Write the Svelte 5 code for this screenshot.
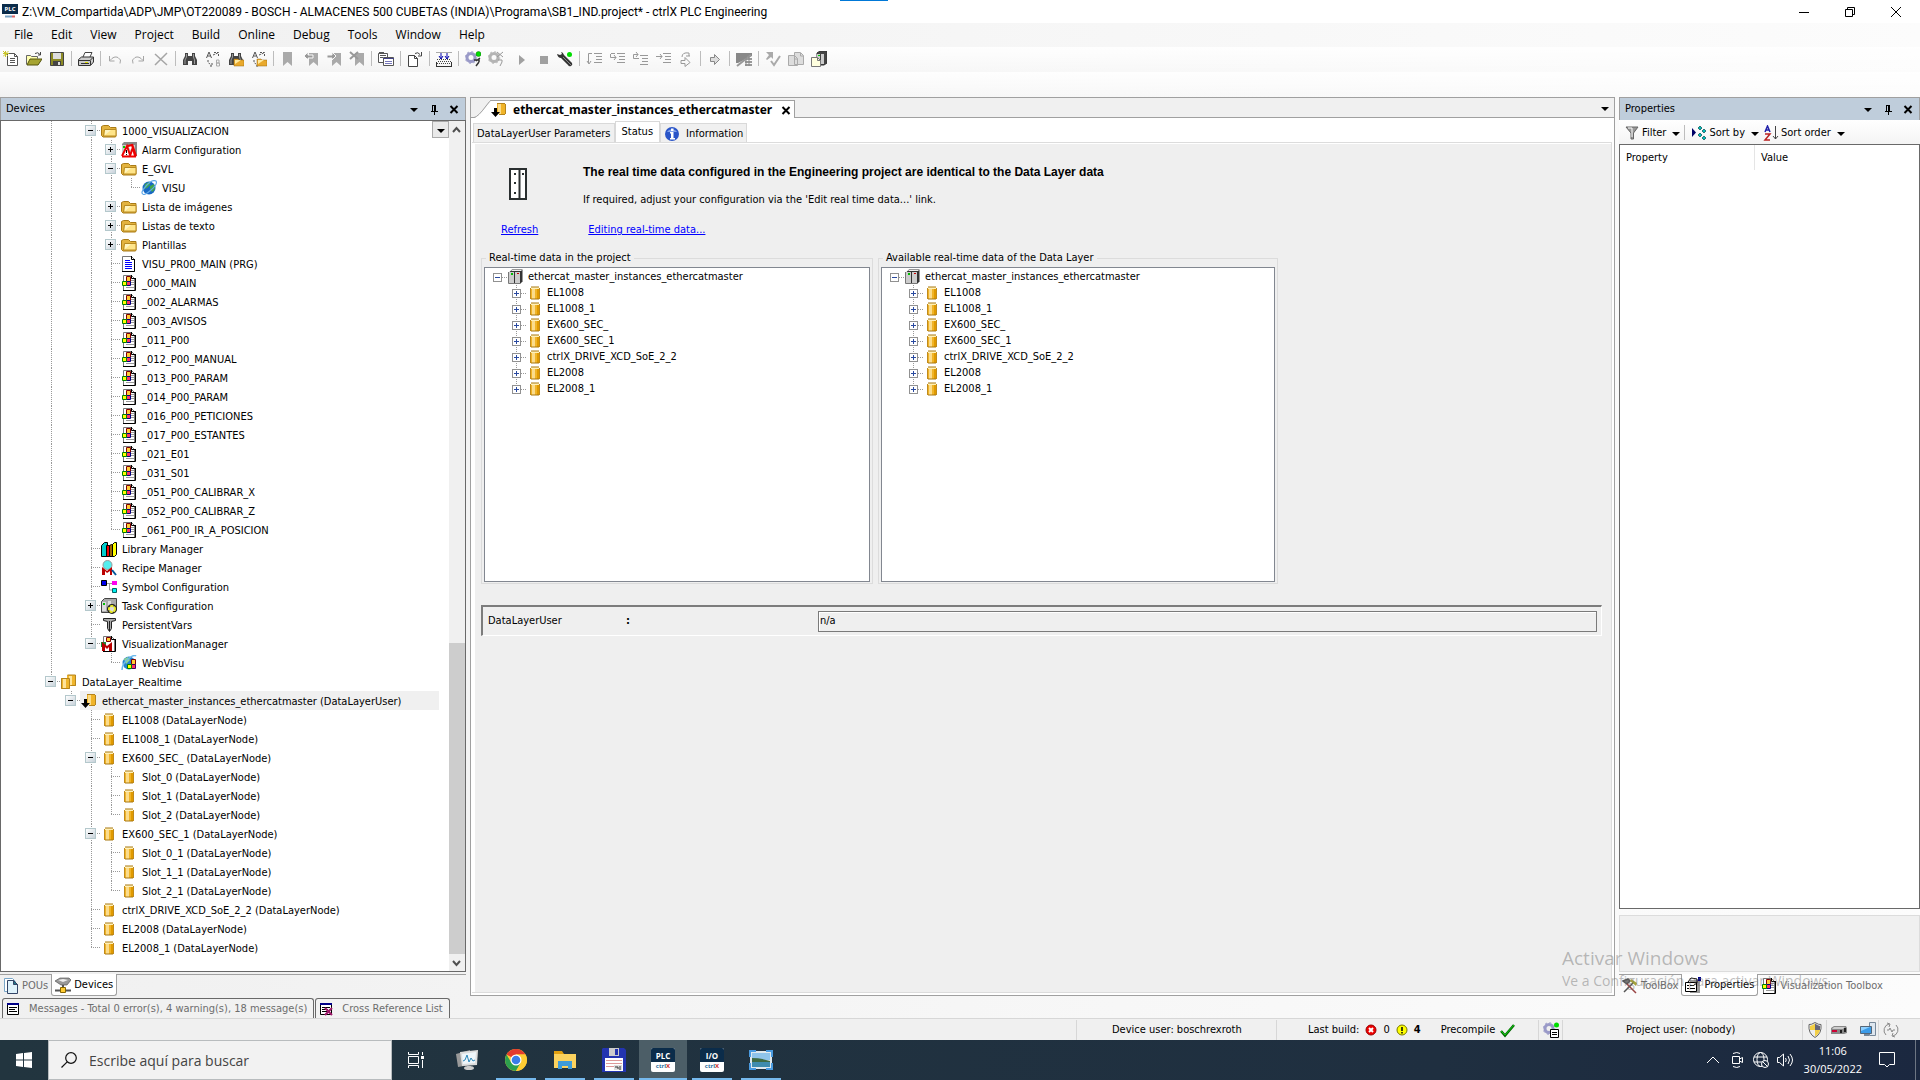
<script>
  const menus = [
    "File",
    "Edit",
    "View",
    "Project",
    "Build",
    "Online",
    "Debug",
    "Tools",
    "Window",
    "Help",
  ];

  const toolGroups = [
    ["new", "open", "save"],
    ["print"],
    ["undo", "redo", "delete"],
    ["find", "replace", "findFiles", "replaceFiles"],
    ["bookmark", "bookmarkPrev", "bookmarkNext", "bookmarkClear"],
    ["copyList"],
    ["export"],
    ["build"],
    ["login", "logout", "play", "stop", "wrench"],
    ["stepOver", "stepInto", "stepOut", "runTo", "setNext"],
    ["arrow"],
    ["flow"],
    ["check", "copy", "deviceCopy"],
  ];

  // depth, icon, label, expander state
  const nodes = [
    [2, "folder", "1000_VISUALIZACION", "-"],
    [3, "alarm", "Alarm Configuration", "+"],
    [3, "folder", "E_GVL", "-"],
    [4, "globe", "VISU"],
    [3, "folder", "Lista de imágenes", "+"],
    [3, "folder", "Listas de texto", "+"],
    [3, "folder", "Plantillas", "+"],
    [3, "page", "VISU_PR00_MAIN (PRG)"],
    [3, "visu", "_000_MAIN"],
    [3, "visu", "_002_ALARMAS"],
    [3, "visu", "_003_AVISOS"],
    [3, "visu", "_011_P00"],
    [3, "visu", "_012_P00_MANUAL"],
    [3, "visu", "_013_P00_PARAM"],
    [3, "visu", "_014_P00_PARAM"],
    [3, "visu", "_016_P00_PETICIONES"],
    [3, "visu", "_017_P00_ESTANTES"],
    [3, "visu", "_021_E01"],
    [3, "visu", "_031_S01"],
    [3, "visu", "_051_P00_CALIBRAR_X"],
    [3, "visu", "_052_P00_CALIBRAR_Z"],
    [3, "visu", "_061_P00_IR_A_POSICION"],
    [2, "books", "Library Manager"],
    [2, "recipe", "Recipe Manager"],
    [2, "symbols", "Symbol Configuration"],
    [2, "task", "Task Configuration", "+"],
    [2, "persistent", "PersistentVars"],
    [2, "visuManager", "VisualizationManager", "-"],
    [3, "webVisu", "WebVisu"],
    [0, "drums", "DataLayer_Realtime", "-"],
    [1, "drumDown", "ethercat_master_instances_ethercatmaster (DataLayerUser)", "-"],
    [2, "drum", "EL1008 (DataLayerNode)"],
    [2, "drum", "EL1008_1 (DataLayerNode)"],
    [2, "drum", "EX600_SEC_ (DataLayerNode)", "-"],
    [3, "drum", "Slot_0 (DataLayerNode)"],
    [3, "drum", "Slot_1 (DataLayerNode)"],
    [3, "drum", "Slot_2 (DataLayerNode)"],
    [2, "drum", "EX600_SEC_1 (DataLayerNode)", "-"],
    [3, "drum", "Slot_0_1 (DataLayerNode)"],
    [3, "drum", "Slot_1_1 (DataLayerNode)"],
    [3, "drum", "Slot_2_1 (DataLayerNode)"],
    [2, "drum", "ctrlX_DRIVE_XCD_SoE_2_2 (DataLayerNode)"],
    [2, "drum", "EL2008 (DataLayerNode)"],
    [2, "drum", "EL2008_1 (DataLayerNode)"],
  ];

  let selected = $state(30);

  // a level keeps its line while a sibling follows before the branch closes
  const continues = (index, level) => {
    for (let i = index + 1; i < nodes.length; i++) {
      if (nodes[i][0] === level) return true;
      if (nodes[i][0] < level) return false;
    }
    return false;
  };

  const rows = nodes.map(([depth, icon, label, state], index) => ({
    icon,
    label,
    state,
    cells: Array.from({ length: depth + 1 }, (_, level) => ({
      own: level === depth,
      below: continues(index, level),
    })),
  }));

  const dataNodes = [
    "EL1008",
    "EL1008_1",
    "EX600_SEC_",
    "EX600_SEC_1",
    "ctrlX_DRIVE_XCD_SoE_2_2",
    "EL2008",
    "EL2008_1",
  ];

  const groups = [
    "Real-time data in the project",
    "Available real-time data of the Data Layer",
  ];

  const apps = [
    { icon: "monitor", label: "Monitor" },
    { icon: "chrome", label: "Chrome", open: true },
    { icon: "explorer", label: "Explorer", open: true },
    { icon: "floppy", label: "Total Commander", open: true },
    { icon: "plc", label: "PLC", open: true, active: true },
    { icon: "io", label: "I/O", open: true },
    { icon: "photo", label: "Photo", open: true },
  ];

  let userState = $state("n/a");
  let search = $state("");
</script>

{#snippet drumShape()}
  <path d="M4 3h8v11H4z" fill="#f0b429" />
  <path d="M5 3h3v11H5z" fill="#fbdc8c" />
  <path d="M10 3h2v11h-2z" fill="#e09a00" />
  <path d="M4 2h8v2H4z" fill="#fff0b8" />
  <path d="M4 2h8M4 14h8" stroke="#a87812" />
  <path d="M3.5 3v11M12.5 3v11" stroke="#c08a1c" />
{/snippet}

{#snippet pageShape()}
  <path d="M2.500.5h8l3 3v12h-11z" fill="#fff" stroke="#777" />
  <path d="M14.500 3v12.500H2M10.500 0v3.500H14" fill="none" stroke="#000" />
{/snippet}

{#snippet visuShape()}
  {@render pageShape()}
  <path d="M10 5.500h3M10 7.500h3M10 9.500h3M5 12.500h8" stroke="#999" />
  <path d="M5.500 1.500h4v5h-4z" fill="#fc3" stroke="#800000" />
  <path d="M5.500 6.500h4v4h-4z" fill="#f36" stroke="#000080" />
  <path d="M1.500 6.500h4v4h-4z" fill="#ff0" stroke="#008000" />
{/snippet}

{#snippet bookmarkShape()}
  <path d="M6 2h9v13l-4.500-4L6 15z" fill="#aaa" />
{/snippet}

{#snippet binoculars()}
  <path d="M3 2h3v3h4V2h3v3l2 4v5h-5v-4H6v4H1V9l2-4z" fill="#444" />
  <path d="M4.500 3v3L3 9v4M11.500 3v3l1 3v4" fill="none" stroke="#999" />
{/snippet}

{#snippet replaceShape()}
  <path d="M1.500 7L4 1l2.500 6M2.500 5h3" fill="none" stroke="#555" />
  <path d="M8 4l5-2M9 1.500h4.500V6M3 9v2l3 3.500M7 12v3H4" fill="none" stroke="#555" stroke-dasharray="2 1" />
{/snippet}

{#snippet miniFolder()}
  <path d="M6 8h4l1 1h5v6H6z" fill="#e9a92c" stroke="#9b6a12" stroke-width=".5" />
  <path d="M7 9h6l-6 4z" fill="#ffeaa0" />
{/snippet}

{#snippet gearShape(color)}
  <circle cx="6" cy="6.500" r="4" fill="none" stroke={color} stroke-width="3" />
  <circle cx="6" cy="6.500" r="5.800" fill="none" stroke={color} stroke-dasharray="2 2.500" />
{/snippet}

{#snippet icon(name)}
  <svg class="icon" viewBox="0 0 16 16" aria-hidden="true">
    {#if name === "new"}
      <path d="M4.500 2.500h7l3 3v9h-10z" fill="#fff" stroke="#555" />
      <path d="M11.500 2.500v3h3M7 7.500h5M7 9.500h5M7 11.500h5" fill="none" stroke="#555" />
      <path d="M0 0l5 5M5.500 0L0 5.500M2.500 0v6M0 2.500h6" stroke="#c9c52c" />
    {:else if name === "open"}
      <path d="M.5 13.500v-9h4l1 1h6v2" fill="#ffffb0" stroke="#666" />
      <path d="M1 14l3-6h12l-4 6z" fill="#a6a432" stroke="#55550c" />
      <path d="M9 2.500q3-2 5 1M14.500 1v3H12" fill="none" stroke="#444" />
    {:else if name === "save"}
      <path d="M1.500 1.500h13v13h-13z" fill="#8c8a24" stroke="#444" />
      <path d="M4 2h8v6H4z" fill="#ddd" />
      <path d="M4 10h8v5H4z" fill="#444" />
      <path d="M9 11h2v3H9z" fill="#ddd" />
    {:else if name === "print"}
      <path d="M5 6l2-4.500h7L12 6" fill="#fff" stroke="#444" />
      <path d="M.5 8.500l3-2.500h12v5l-3 3.500H.5z" fill="#ccc" stroke="#333" />
      <path d="M1 9.500h11l3-3M12.500 9.500V14M3 12.500h8" fill="none" stroke="#333" />
      <path d="M7 11h3v1H7z" fill="#dd0" />
    {:else if name === "undo"}
      <path d="M2.500 5v5h5M3 9.500q4-5 8-3t2 6" fill="none" stroke="#a5a5a5" />
    {:else if name === "redo"}
      <path d="M13.500 5v5h-5M13 9.500q-4-5-8-3t-2 6" fill="none" stroke="#a5a5a5" />
    {:else if name === "delete"}
      <path d="M2 3l12 11M14 2L2 14" stroke="#a5a5a5" stroke-width="1.500" />
    {:else if name === "find"}
      {@render binoculars()}
    {:else if name === "replace"}
      {@render replaceShape()}
      <path d="M11.500 9v6h3v-3h-3h2.500V9z" fill="none" stroke="#aaa" />
    {:else if name === "findFiles"}
      {@render binoculars()}
      {@render miniFolder()}
    {:else if name === "replaceFiles"}
      {@render replaceShape()}
      {@render miniFolder()}
    {:else if name === "bookmark"}
      <path d="M3 1h9v14l-4.500-4L3 15z" fill="#aaa" />
    {:else if name === "bookmarkPrev"}
      {@render bookmarkShape()}
      <path d="M1 5l4-4v3h5v3H5v2z" fill="#999" stroke="#f8f8f8" />
    {:else if name === "bookmarkNext"}
      {@render bookmarkShape()}
      <path d="M10 5L6 1v3H1v3h5v2z" fill="#999" stroke="#f8f8f8" />
    {:else if name === "bookmarkClear"}
      {@render bookmarkShape()}
      <path d="M1 1l8 7M9 1L1 8" stroke="#999" stroke-width="2" />
    {:else if name === "copyList"}
      <path d="M.5 2.500h9v9h-9z" fill="#fff" stroke="#555" />
      <path d="M1 1.500h5M2 4.500h6M2 6.500h3" stroke="#555" />
      <path d="M5.500 6.500h10v8h-10z" fill="#fff" stroke="#555" />
      <path d="M5 7.500h11" stroke="#448" />
      <path d="M7 10.500h7M7 12.500h7" stroke="#77b" />
    {:else if name === "export"}
      <path d="M1.500 4.500h6l3 3v8h-9z" fill="#fff" stroke="#444" />
      <path d="M7.500 4.500v3h3M8 2.500q3-2 5 1M14.500 1v4H11" fill="none" stroke="#444" />
    {:else if name === "build"}
      <path d="M0 1.500h16" stroke="#aaa" />
      <path d="M0 15.500h16M.5 11v5M15.500 11v5" stroke="#333" />
      <path d="M1 8.500h14M2 10.500h13M1 12.500h14" stroke="#444" stroke-dasharray="1 1" />
      <path d="M5 2v6M3 5l2 3 2-3M11 2v6M9 5l2 3 2-3" fill="none" stroke="#00a" />
    {:else if name === "login"}
      {@render gearShape("#9a9ac8")}
      <circle cx="13.500" cy="3" r="2.500" fill="#0d0" stroke="#070" stroke-width=".5" />
      <path d="M9 9h5v2M11 15l3-4M15 7l-4 3" fill="none" stroke="#333" stroke-width="1.500" />
    {:else if name === "logout"}
      {@render gearShape("#b4b4b4")}
      <path d="M9 1l6 5M15 1L9 6M10 9h4v2M12 15l2-4" fill="none" stroke="#999" />
    {:else if name === "play"}
      <path d="M8 4l6 5-6 5z" fill="#a0a0a0" />
    {:else if name === "stop"}
      <path d="M6 5h8v8H6z" fill="#a0a0a0" />
    {:else if name === "wrench"}
      <path d="M4 1q2 0 3 3l8 8q1 2-1 3t-3-1L4 7Q1 7 0 3l3 1 2-1z" fill="#333" />
      <path d="M6 6l8 8" stroke="#888" />
      <circle cx="12.500" cy="3.500" r="2.500" fill="#0d0" />
    {:else if name === "stepOver"}
      <path d="M8 2.500h8M10 5.500h6M10 8.500h6M8 11.500h8M6 2.500H2.500V12M1 10l2 3 2-3" fill="none" stroke="#999" />
    {:else if name === "stepInto"}
      <path d="M8 2.500h8M10 5.500h6M10 8.500h6M8 11.500h8M2 2.500h4M1.500 3v3.500H7M5 4l2 2.500L5 9" fill="none" stroke="#999" />
    {:else if name === "stepOut"}
      <path d="M8 4.500h8M10 7.500h6M10 10.500h6M8 13.500h8M7 7.500H1.500v-4H6M4 1l2 2.500L4 6" fill="none" stroke="#999" />
    {:else if name === "runTo"}
      <path d="M8 2.500h8M10 5.500h6M10 8.500h6M8 11.500h8M1 5.500h6M5 3l2 2.500L5 8" fill="none" stroke="#999" />
    {:else if name === "setNext"}
      <path d="M4 6q0-5 7-4v3M8 5h4M3 9.500h4v-3l5 5-5 4v-3H3z" fill="none" stroke="#999" />
    {:else if name === "arrow"}
      <path d="M3.500 6.500h4v-3l5 5-5 5v-3h-4z" fill="#ddd" stroke="#888" />
    {:else if name === "flow"}
      <path d="M0 2h16v3L2 12H0z" fill="#888" />
      <path d="M15 4L1 15M9 8h7M9 11h7M9 14h7" stroke="#999" stroke-width="2" />
      <path d="M10 6v9M13 5v10" stroke="#888" />
    {:else if name === "check"}
      <path d="M1 1h7v7L6 6l-4 3-1-1 3-4z" fill="#aaa" />
      <path d="M6 10l3 4 6-9" fill="none" stroke="#aaa" stroke-width="2" />
    {:else if name === "copy"}
      <path d="M6.500 1.500h6l3 3v9h-9zM.5 4.500h6l3 3v7H.5z" fill="#ddd" stroke="#aaa" />
      <path d="M12.500 2v3h3M6.500 5v3h3" fill="none" stroke="#aaa" />
    {:else if name === "deviceCopy"}
      <path d="M6 2l3-2h7v12l-3 2H6z" fill="#444" stroke="#333" />
      <path d="M6 3h3v10H6zM10 3h3v10h-3z" fill="#ccc" />
      <path d="M7 4h2v1H7z" fill="#0c0" />
      <path d="M.5 6.500h6l3 3v6H.5z" fill="#ffffdf" stroke="#777" />
      <path d="M6.500 6.500v3h3" fill="none" stroke="#777" />
    {:else if name === "folder"}
      <path d="M.5 12.500v-9l2-1h5l2 2h5.500v9L14 14H2z" fill="#e3b33e" stroke="#a97b16" />
      <path d="M3.500 6.500h11.500v6.500H2.500z" fill="#ffe58a" stroke="#b88a20" />
      <path d="M4 7h6l-6 5z" fill="#fff5c0" />
    {:else if name === "alarm"}
      <path d="M1 2l2-2h13v14l-2 1H1z" fill="#888" />
      <path d="M1 3h13v11H1z" fill="#ccc" />
      <path d="M2 4h2v2H2z" fill="#0c0" />
      <path d="M1 14L6 4l3 9M7 4l4-1 3 11M9 14l3-9 3 9" fill="#fff" stroke="#e00" stroke-width="2" />
      <path d="M1 14.500h14" stroke="#e00" stroke-width="2" />
      <path d="M5.500 8v3M5.500 12v1" stroke="#000" />
    {:else if name === "globe"}
      <circle cx="8" cy="8" r="6.500" fill="#1768c4" />
      <path d="M4 4l4-2 1 3-3 3-3 1zM9 6l4-2 1 5-3 3-2-3z" fill="#3fa648" />
      <path d="M2 14Q-1 13 5 6T15 1Q17 4 10 10T2 14" fill="none" stroke="#61a9e8" stroke-width="1.200" />
    {:else if name === "page"}
      <path d="M1.500.5h9l3 3v12h-12z" fill="#fff" stroke="#777" />
      <path d="M13.500 3v12.500H1M10.500 0v3.500H14" fill="none" stroke="#000" />
      <path d="M4 4.500h5M4 6.500h7M4 8.500h7M4 10.500h7M4 12.500h7" stroke="#00f" />
    {:else if name === "visu"}
      {@render visuShape()}
    {:else if name === "books"}
      <path d="M.5 4.500l3-3h3v14h-6z" fill="#0cc" stroke="#000" />
      <path d="M5.500 4.500h3v11h-3z" fill="#e00" stroke="#000" />
      <path d="M8.500 4.500l2-1h2v12h-4z" fill="#960" stroke="#000" />
      <path d="M11.500 3.500l2-2h2v12l-2 2h-2z" fill="#ff0" stroke="#000" />
    {:else if name === "recipe"}
      <circle cx="6.500" cy="5" r="4.500" fill="#5ee" stroke="#999" />
      <path d="M1 15V7l5 4 5-4v8H9v-4l-3 2-2-2v4z" fill="#b00" />
      <path d="M11 10l4 5" stroke="#059" stroke-width="2" />
    {:else if name === "symbols"}
      <path d="M6 4.500h5M8.500 4v7H11" fill="none" stroke="#999" />
      <path d="M.5 1.500h5v5h-5z" fill="#00e" stroke="#000" />
      <path d="M11 2h5v4h-5z" fill="#f0e" />
      <path d="M11.500 9.500h4v4h-4z" fill="#0ee" stroke="#066" />
    {:else if name === "task"}
      <path d="M.5 3.500l3-3h12v11l-2 3H.5z" fill="#aaa" stroke="#444" />
      <path d="M1 4h4v9H1zM7 3h3v5H7z" fill="#ddd" />
      <path d="M2 5h2v2H2z" fill="#0b0" />
      <circle cx="11" cy="11" r="3" fill="none" stroke="#222" stroke-width="4" />
      <circle cx="11" cy="11" r="3" fill="#ddd" stroke="#ee2" stroke-width="2" stroke-dasharray="3 1" />
    {:else if name === "persistent"}
      <path d="M2.500 1.500h12v2l-4 1v7l-2 3-2-3v-7l-4-1z" fill="#aaa" stroke="#222" />
      <path d="M8.500 4v10" stroke="#222" />
    {:else if name === "visuManager"}
      {@render pageShape()}
      <path d="M5.500 1.500h4v4h-4z" fill="#fc3" stroke="#800000" />
      <path d="M0 6h5v5H0z" fill="#283" />
      <path d="M1 15V6l5 4 5-4v9H8v-4l-2 2-2-2v4z" fill="#b00" />
    {:else if name === "webVisu"}
      <circle cx="8" cy="8" r="6.500" fill="#2583cf" />
      <path d="M3 4l4-2 2 3-4 4z" fill="#8ed58f" />
      <path d="M1 15Q1 9 7 4t8-3" fill="none" stroke="#6bb9ec" stroke-width="1.500" />
      <path d="M10.500 4.500h4v5h-4z" fill="#fc3" stroke="#800000" />
      <path d="M10.500 9.500h4v4h-4z" fill="#f36" stroke="#400060" />
      <path d="M6.500 9.500h4v4h-4z" fill="#ff0" stroke="#008000" />
    {:else if name === "drums"}
      <path d="M6 1h9v11H6zM0 4h9v11H0z" fill="#efb52c" />
      <path d="M8 2h3v9H8zM2 5h3v9H2z" fill="#ffe49a" />
      <path d="M6.500 1h8v10.500H9.500M.5 4.500h8v10h-8z" fill="none" stroke="#b5841d" />
    {:else if name === "drumDown"}
      <path d="M6 1h8v11H6z" fill="#f0b429" />
      <path d="M7 1h3v11H7z" fill="#fbdc8c" />
      <path d="M6 1.500h8M14.500 2v10M8 12.500h6" stroke="#b5841d" />
      <path d="M3 6h3v4h3l-4.500 5L0 10h3z" fill="#000" />
    {:else if name === "drum"}
      {@render drumShape()}
    {:else if name === "device"}
      <path d="M1.500 3L4 .5h10.500v12L12 15H1.500z" fill="#333" />
      <path d="M1 3h5v11H1zM7 3h5v11H7z" fill="#ccc" />
      <path d="M3 2l1-1h10l-1 1z" fill="#eee" />
      <path d="M3 4h2v2H3z" fill="#0b0" />
      <path d="M9 4h2v1H9z" fill="#c00" />
      <path d="M.5 3v11.500H12" fill="none" stroke="#777" />
    {:else if name === "info"}
      <circle cx="8" cy="8" r="7" fill="#2a55c8" />
      <path d="M3 6a6 6 0 0 1 10 0" fill="#7fa0ea" />
      <path d="M7 2.500h2.500V5H7zM6 6h3.500v6H11v1.500H6V12h1V7.500H6z" fill="#fff" />
    {:else if name === "filter"}
      <path d="M2 2h12L9.500 8v6H7V8z" fill="#999" stroke="#666" />
      <path d="M4 3h4v9" fill="none" stroke="#fff" />
    {:else if name === "sortBy"}
      <path d="M1 3l4 4.500L1 12z" fill="#006" />
      <path d="M9 1l2 2-2 2-2-2zM13 4l2 2-2 2-2-2zM9 8l2 2-2 2-2-2zM13 11l2 2-2 2-2-2z" fill="#0bb" stroke="#033" stroke-width=".6" />
    {:else if name === "sortOrder"}
      <path d="M2 7l2.500-6L7 7M3 5h3" fill="none" stroke="#22a" stroke-width="1.500" />
      <path d="M2 9h5L2 15h5" fill="none" stroke="#b22" stroke-width="1.500" />
      <path d="M12.500 1v13M10 11l2.500 3 2.500-3" fill="none" stroke="#444" />
    {:else if name === "pous"}
      <path d="M1.500.5h8l3 3v10h-11z" fill="#fff" stroke="#7aa6c8" />
      <path d="M4.500 2.500h6l4 4v9h-10z" fill="#dff2fb" stroke="#346" />
      <path d="M10.500 2.500v4h4z" fill="#278" stroke="#346" />
    {:else if name === "devices"}
      <path d="M0 4l5-3h9l2 2-4 5H6z" fill="#999" stroke="#444" stroke-width=".6" />
      <path d="M3 3l5-1 5 1-5 2z" fill="#eee" />
      <path d="M8 8v3M0 13.500h16" stroke="#555" stroke-width="2" />
      <path d="M5.500 10.500h5v5h-5z" fill="#fc3" stroke="#860" />
    {:else if name === "messages" || name === "crossRef"}
      <path d="M2.500 2.500h11v11h-11z" fill="#fff" stroke="#000" />
      <path d="M2 3h12" stroke="#008" stroke-width="2" />
      <path d="M4 6.500h8M4 8.500h6M4 10.500h8" stroke="#000" />
      {#if name === "crossRef"}
        <path d="M7 7l7 7M14 7l-7 7" stroke="#a0186b" stroke-width="2" />
      {/if}
    {:else if name === "toolbox"}
      <path d="M2 14L12 4M1 3l5-2 2 2-3 3z" fill="#777" stroke="#555" stroke-width="1.500" />
      <path d="M5 6l9 9" stroke="#944" stroke-width="1.500" />
      <path d="M9 1l6 4-1 3-6-5z" fill="#a4a33a" />
    {:else if name === "properties"}
      <path d="M5 3h10v13H5z" fill="#999" />
      <path d="M.5 5.500h11v9H.5z" fill="#fff" stroke="#000" />
      <path d="M3 5l3-4 6 1v4L9 8M2 8.500h2M5 8.500h4M2 11.500h2M5 11.500h5" fill="none" stroke="#000" />
      <path d="M13 0h3v4h-3z" fill="#008" />
    {:else if name === "error"}
      <circle cx="8" cy="8" r="5" fill="#e00" stroke="#900" />
      <path d="M6 6l4 4M10 6l-4 4" stroke="#fff" stroke-width="2" />
    {:else if name === "warning"}
      <circle cx="8" cy="8" r="5" fill="#ff0" stroke="#770" />
      <path d="M8 5v4M8 10v1.500" stroke="#000" stroke-width="1.500" />
    {:else if name === "ok"}
      <path d="M2 9l4 4.500L15 3" fill="none" stroke="#060" stroke-width="2.500" />
      <path d="M2 9l4 4L15 3" fill="none" stroke="#1c1" stroke-width="1" />
    {:else if name === "gearPage"}
      {@render gearShape("#9a9ac8")}
      <circle cx="13.500" cy="3" r="2.500" fill="#0d0" />
      <path d="M7.500 7.500h8v8h-8z" fill="#fff" stroke="#000" />
      <path d="M9 10.500h5M9 12.500h5" stroke="#000" />
    {:else if name === "shield"}
      <path d="M8 .5Q12 3 14 2.500q1 9-6 13-7-4-6-13Q4 3 8 .5z" fill="#eee" stroke="#666" />
      <path d="M8 1.500v6.500H3V4Q6 3 8 1.500zM8 8h5q-1 4-5 6.500z" fill="#f3cf46" />
      <path d="M8 1.500v6.500h5V4Q10 3 8 1.500z" fill="#667" />
    {:else if name === "plug"}
      <path d="M0 6l3-2h12l1 2v5l-3 1H0z" fill="#888" />
      <path d="M3 5h11l-2 2H1z" fill="#ccc" />
      <path d="M1 8h5v2H1z" fill="#c03" />
      <path d="M9 8h2v3H9zM13 6h2v4h-2z" fill="#222" />
    {:else if name === "computer"}
      <path d="M9.500.5h6v13h-6z" fill="#dde6ef" stroke="#789" />
      <path d="M.5 4.500h11v7H.5z" fill="#3b9be8" stroke="#567" />
      <path d="M1 5h9l-9 4z" fill="#8fd0ff" />
      <path d="M4 12h5v2H4z" fill="#789" />
    {:else if name === "refresh"}
      <path d="M3 13A6.500 6.500 0 0 1 6 2M13 3A6.500 6.500 0 0 1 10 14M4 1l3 1-1 3M12 15l-3-1 1-3M4 8h2l1-2 2 4 1-2h2" fill="none" stroke="#888" />
    {:else if name === "caret"}
      <path d="M4 7h8l-4 4z" fill="#000" />
    {:else if name === "pin"}
      <path d="M6.500 4v6M6 4.500h4M9.500 4v6M8.500 4v6M5 10.500h7M8.500 11v3" fill="none" stroke="#000" />
    {:else if name === "close"}
      <path d="M4.500 5l7 7M11.500 5l-7 7" stroke="#000" stroke-width="2" />
    {/if}
  </svg>
{/snippet}

{#snippet appIcon(name)}
  <svg class="app-icon" viewBox="0 0 24 24" aria-hidden="true">
    {#if name === "plc" || name === "io"}
      <rect width="24" height="24" rx="2" fill="#fff" />
      <path d="M0 14V2q0-2 2-2h20q2 0 2 2v12z" fill="#0b2c4a" />
      <text x="12" y="10.500" class="app-name" fill="#fff">{name === "plc" ? "PLC" : "I/O"}</text>
      <text x="12" y="20" class="app-brand" fill="#2b6ea0">ctrl<tspan fill="#c22">X</tspan></text>
    {:else if name === "monitor"}
      <path d="M1 6l14-4v15L3 19z" fill="#999" />
      <path d="M5 4l18-2-1 15-15 1z" fill="#ddd" />
      <path d="M7 6l14-2-1 11-12 1z" fill="#eef6fb" />
      <path d="M8 13l2-1 2-5 2 7 2-4 2 3 2-1" fill="none" stroke="#2b86b8" />
      <path d="M12 18h4v2H12z" fill="#aaa" />
      <ellipse cx="14" cy="20" rx="5" ry="2" fill="#ccc" />
    {:else if name === "chrome"}
      <circle cx="12" cy="12" r="11" fill="#fc3" />
      <path d="M12 12L2.500 6.500A11 11 0 0 1 21.500 6.500H12z" fill="#e33b2e" />
      <path d="M12 23A11 11 0 0 1 2.500 6.500L7.500 15l9 0z" fill="#2da04e" />
      <path d="M12 6.500h9.500A11 11 0 0 1 12 23l4.700-8z" fill="#fc3" />
      <circle cx="12" cy="12" r="5.500" fill="#fff" />
      <circle cx="12" cy="12" r="4.300" fill="#3b7de8" />
    {:else if name === "explorer"}
      <path d="M1 3h8l2 3H1z" fill="#e2a010" />
      <path d="M1 6h22v14H1z" fill="#fbd25e" />
      <path d="M5 21v-8h14v8h-4v-3H9v3z" fill="#3f9bd8" />
    {:else if name === "floppy"}
      <path d="M1 0h21l2 2v22H0V1z" fill="#2334b0" />
      <path d="M7 0h10v8H7z" fill="#ccc" />
      <path d="M13 1h3v6h-3z" fill="#2334b0" />
      <path d="M3 10h18v13H3z" fill="#fff" />
      <path d="M4 12.500h16M4 15.500h16M4 18.500h8" stroke="#d99" />
      <path d="M12 17h8v5h-8z" fill="#ddd" />
      <path d="M13 19h3v2M18 18v4" fill="none" stroke="#333" />
    {:else}
      <path d="M1 3h22v18H1z" fill="#dfe9ee" />
      <path d="M3 5h18v7H3z" fill="#8fc4ea" />
      <path d="M3 10q9 0 18 3v2H3z" fill="#3f6b43" />
      <path d="M3 14h18v5H3z" fill="#3f8cae" />
      <path d="M1 9V3h6M17 3h6v6M23 15v6h-6M7 21H1v-6" fill="none" stroke="#4a9be0" stroke-width="2" />
    {/if}
  </svg>
{/snippet}

{#snippet paneButtons()}
  <button aria-label="Window position">{@render icon("caret")}</button>
  <button aria-label="Auto hide">{@render icon("pin")}</button>
  <button aria-label="Close">{@render icon("close")}</button>
{/snippet}

<div class="screen">
  <header class="titlebar">
    <svg class="icon" viewBox="0 0 16 16" aria-hidden="true">
      <path d="M0 0h16v16H0z" fill="#fff" />
      <path d="M0 0h16v10H0z" fill="#0b2c4a" />
      <text x="8" y="7" class="tiny-name" fill="#fff">PLC</text>
      <path d="M3 12.500h7" stroke="#79a3c4" stroke-width="2" />
      <path d="M10 12.500h3" stroke="#d66" stroke-width="2" />
    </svg>
    <h1>Z:\VM_Compartida\ADP\JMP\OT220089 - BOSCH - ALMACENES 500 CUBETAS (INDIA)\Programa\SB1_IND.project* - ctrlX PLC Engineering</h1>
    <span class="capture"></span>
    <div class="window-buttons">
      <button aria-label="Minimize">
        <svg viewBox="0 0 10 10"><path d="M0 5.500h10" stroke="#000" /></svg>
      </button>
      <button aria-label="Restore">
        <svg viewBox="0 0 10 10">
          <path d="M.5 2.500h7v7h-7zM2.500 2V.5h7v7H8" fill="none" stroke="#000" />
        </svg>
      </button>
      <button aria-label="Close window">
        <svg viewBox="0 0 10 10"><path d="M0 0l10 10M10 0L0 10" stroke="#000" /></svg>
      </button>
    </div>
  </header>

  <nav class="menubar">
    {#each menus as menu}
      <button>{menu}</button>
    {/each}
  </nav>

  <div class="toolbar">
    {#each toolGroups as tools, i}
      {#if i > 0}<span class="divider"></span>{/if}
      {#each tools as tool}
        <button aria-label={tool}>{@render icon(tool)}</button>
      {/each}
    {/each}
  </div>
  <div class="toolbar spare"></div>

  <main>
    <section class="side devices">
      <div class="pane-title">
        <h2>Devices</h2>
        {@render paneButtons()}
      </div>
      <div class="tree-box">
        <ul class="tree">
          {#each rows as row, i}
            <li>
              {#each row.cells as cell}
                <span
                  class="cell"
                  class:full={cell.below}
                  class:half={cell.own && !cell.below}
                  class:own={cell.own}
                >
                  {#if cell.own && row.state}
                    <button class="expander" aria-label="Toggle {row.label}">
                      <svg viewBox="0 0 9 9">
                        <path d="M2 4.500h5" stroke="#000" />
                        {#if row.state === "+"}<path d="M4.500 2v5" stroke="#000" />{/if}
                      </svg>
                    </button>
                  {/if}
                </span>
              {/each}
              <button class="node" class:selected={selected === i} onclick={() => (selected = i)}>
                {@render icon(row.icon)}
                <span>{row.label}</span>
              </button>
            </li>
          {/each}
        </ul>
        <button class="tree-menu" aria-label="Tree options">{@render icon("caret")}</button>
        <div class="scrollbar">
          <svg viewBox="0 0 15 17"><path d="M4 11l3.500-4 3.500 4" /></svg>
          <span class="before"></span>
          <span class="thumb"></span>
          <svg viewBox="0 0 15 17"><path d="M4 7l3.500 4L11 7" /></svg>
        </div>
      </div>
      <div class="pane-tabs">
        <button>{@render icon("pous")}POUs</button>
        <button class="active">{@render icon("devices")}Devices</button>
      </div>
    </section>

    <section class="editor">
      <div class="doc-tabs">
        <div class="doc-tab">
          <svg class="slant" viewBox="0 0 20 18" aria-hidden="true">
            <path d="M0 18Q4 17 12 7T20 .5V18z" fill="#fff" />
            <path d="M0 17.500Q4 17 12 6T20 .5" fill="none" stroke="#a0a0a0" />
          </svg>
          <span class="doc-label">
            {@render icon("drumDown")}
            <b>ethercat_master_instances_ethercatmaster</b>
            <button aria-label="Close document">{@render icon("close")}</button>
          </span>
        </div>
        <button class="doc-list" aria-label="Open documents">{@render icon("caret")}</button>
      </div>
      <div class="page-tabs">
        <button>DataLayerUser Parameters</button>
        <button class="active">Status</button>
        <button>{@render icon("info")}Information</button>
      </div>

      <div class="page">
        <div class="intro">
          <svg class="rack" viewBox="0 0 18 32" aria-hidden="true">
            <path d="M1 1h16v30H1zM10.500 1v30" fill="#fff" stroke="#2a2f30" stroke-width="2" />
            <path d="M5 5h2v2H5zM13 5h2v2h-2zM5 14h2v2H5zM5 24h2v2H5z" fill="#2a2f30" />
          </svg>
          <div>
            <h3>The real time data configured in the Engineering project are identical to the Data Layer data</h3>
            <p>If required, adjust your configuration via the 'Edit real time data...' link.</p>
          </div>
        </div>
        <div class="links">
          <a href="#refresh">Refresh</a>
          <a href="#edit">Editing real-time data...</a>
        </div>

        <div class="groups">
          {#each groups as group}
            <fieldset>
              <legend>{group}</legend>
              <div class="data-tree">
                <div class="data-root">
                  <button class="box" aria-label="Collapse">
                    <svg viewBox="0 0 9 9"><path d="M2 4.500h5" /></svg>
                  </button>
                  <i class="link"></i>
                  {@render icon("device")}
                  <span>ethercat_master_instances_ethercatmaster</span>
                </div>
                {#each dataNodes as node}
                  <div class="data-node">
                    <button class="box" aria-label="Expand {node}">
                      <svg viewBox="0 0 9 9"><path d="M2 4.500h5M4.500 2v5" /></svg>
                    </button>
                    <i class="link"></i>
                    {@render icon("drum")}
                    <span>{node}</span>
                  </div>
                {/each}
              </div>
            </fieldset>
          {/each}
        </div>

        <div class="user-row">
          <label for="user-state">DataLayerUser</label>
          <b>:</b>
          <input id="user-state" bind:value={userState} />
        </div>
      </div>
    </section>

    <section class="side properties">
      <div class="pane-title">
        <h2>Properties</h2>
        {@render paneButtons()}
      </div>
      <div class="filter-bar">
        <button>{@render icon("filter")}Filter{@render icon("caret")}</button>
        <span class="divider"></span>
        <button>{@render icon("sortBy")}Sort by{@render icon("caret")}</button>
        <button>{@render icon("sortOrder")}Sort order{@render icon("caret")}</button>
      </div>
      <div class="property-box">
        <table>
          <thead>
            <tr><th>Property</th><th>Value</th></tr>
          </thead>
        </table>
      </div>
      <div class="description"></div>
      <div class="pane-tabs">
        <button>{@render icon("toolbox")}ToolBox</button>
        <button class="active">{@render icon("properties")}Properties</button>
        <button>{@render icon("visu")}Visualization Toolbox</button>
      </div>
    </section>
  </main>

  <div class="hidden-panes">
    <button>{@render icon("messages")}<span>Messages - Total 0 error(s), 4 warning(s), 18 message(s)</span></button>
    <button>{@render icon("crossRef")}<span>Cross Reference List</span></button>
  </div>

  <footer class="status">
    <span class="device-user">Device user: boschrexroth</span>
    <span class="last-build">
      Last build: {@render icon("error")} 0 {@render icon("warning")} <b>4</b>
      <span class="precompile">Precompile {@render icon("ok")}</span>
    </span>
    <span class="slot">{@render icon("gearPage")}</span>
    <span class="project-user">Project user: (nobody)</span>
    <span class="slot">{@render icon("shield")}</span>
    <span class="slot wide">{@render icon("plug")}{@render icon("computer")}</span>
    <span class="slot">{@render icon("refresh")}</span>
  </footer>

  <div class="taskbar">
    <button class="start" aria-label="Start">
      <svg class="icon" viewBox="0 0 16 16">
        <path d="M0 2l7-1v6.500H0zM8 1l8-1v7.500H8zM0 8.500h7V15l-7-1zM8 8.500h8V16l-8-1z" fill="#fff" />
      </svg>
    </button>
    <label class="search">
      <svg class="icon" viewBox="0 0 16 16" aria-hidden="true">
        <circle cx="10" cy="6" r="5.300" fill="none" stroke="#111" stroke-width="1.200" />
        <path d="M6.200 9.800L.5 15.500" stroke="#111" stroke-width="1.200" />
      </svg>
      <input placeholder="Escribe aquí para buscar" aria-label="Buscar" bind:value={search} />
    </label>
    <button class="app task-view" aria-label="Task view">
      <svg class="icon" viewBox="0 0 16 16">
        <path d="M.5 0v2.500h10V0M.5 4.500h10v7H.5zM.5 16v-2.500h10V16M14.500 0v3M14.500 8v8" fill="none" stroke="#fff" />
        <path d="M13 4h3v3h-3z" fill="#fff" />
      </svg>
    </button>
    {#each apps as app}
      <button class="app" class:open={app.open} class:active={app.active} aria-label={app.label}>
        {@render appIcon(app.icon)}
      </button>
    {/each}
    <div class="tray">
      <svg class="icon" viewBox="0 0 16 16"><path d="M2 11l6-6 6 6" /></svg>
      <svg class="icon" viewBox="0 0 16 16">
        <path d="M3.500 4.500h7v7h-7zM10.500 7l3-1.500v5l-3-1.500M4 1.500q4-2 7 0M4 14.500q4 2 7 0" />
      </svg>
      <svg class="icon" viewBox="0 0 16 16">
        <circle cx="7.500" cy="7.500" r="7" />
        <ellipse cx="7.500" cy="7.500" rx="3.500" ry="7" />
        <path d="M1 5h13M1 10h13" />
        <circle cx="12" cy="12" r="3.500" fill="#1d2c41" />
        <path d="M9.500 9.500l5 5" />
      </svg>
      <svg class="icon" viewBox="0 0 16 16">
        <path d="M.5 5.500h2l4-3.500v12l-4-3.500h-2zM8.500 6q1.500 2 0 4M11 4q3 4 0 8M13 2q5 6 0 12" />
      </svg>
      <time>11:06<br />30/05/2022</time>
      <svg class="icon" viewBox="0 0 16 16"><path d="M.5.500h15v12h-5L8 15l-2.500-2.500h-5z" /></svg>
      <span class="peek"></span>
    </div>
  </div>

  <aside class="watermark">
    <strong>Activar Windows</strong>
    <span>Ve a Configuración para activar Windows.</span>
  </aside>
</div>

<style>
  :global(body) {
    margin: 0;
  }
  .screen {
    --line: #a0a0a0;
    --dark: #696969;
    --face: #f0f0f0;
    position: relative;
    display: flex;
    flex-direction: column;
    min-height: 100vh;
    color: #000;
    font-family: "DejaVu Sans Condensed", Tahoma, sans-serif;
    font-size: 11px;
    line-height: 16px;
    background: linear-gradient(to right, #f0f0f0, #fcfcfc);
  }
  button,
  input {
    margin: 0;
    padding: 0;
    border: 0;
    background: none;
    color: inherit;
    font: inherit;
  }
  button {
    display: flex;
    align-items: center;
    justify-content: center;
    flex: none;
    white-space: nowrap;
  }
  h1,
  h2,
  h3,
  p,
  ul {
    margin: 0;
    padding: 0;
    font-size: inherit;
    font-weight: normal;
  }
  svg {
    display: block;
    flex: none;
  }
  .icon {
    width: 16px;
    height: 16px;
  }

  .titlebar {
    display: flex;
    align-items: center;
    height: 23px;
    padding: 0 1px 0 2px;
    background: #fff;
    font-family: Roboto, "Segoe UI", sans-serif;
    font-size: 12px;
  }
  .titlebar h1 {
    flex: 1;
    margin-left: 4px;
    white-space: nowrap;
  }
  .tiny-name {
    font: bold 6px "Open Sans", sans-serif;
    text-anchor: middle;
  }
  .capture {
    position: absolute;
    top: 0;
    left: 840px;
    width: 48px;
    height: 1px;
    background: #0078d7;
  }
  .window-buttons {
    display: flex;
  }
  .window-buttons button {
    width: 46px;
    height: 23px;
  }
  .window-buttons svg {
    width: 10px;
    height: 10px;
  }
  .menubar {
    display: flex;
    height: 24px;
    padding-left: 5px;
    font-family: "Open Sans", "Segoe UI", sans-serif;
    font-size: 12px;
  }
  .menubar button {
    padding: 0 9px;
  }
  .toolbar {
    box-sizing: border-box;
    display: flex;
    align-items: center;
    height: 25px;
    padding-bottom: 2px;
    background: linear-gradient(rgba(255, 255, 255, 0.9), rgba(255, 255, 255, 0.1));
  }
  .toolbar button {
    width: 23px;
    height: 23px;
    padding-right: 1px;
  }
  .divider {
    width: 1px;
    height: 15px;
    margin: 0 3px 0 2px;
    background: #bdbdbd;
  }

  main {
    display: flex;
    flex: 1;
    gap: 4px;
  }
  .side {
    display: flex;
    flex-direction: column;
    flex: none;
  }
  .devices {
    width: 466px;
  }
  .properties {
    width: 301px;
  }
  .pane-title {
    display: flex;
    align-items: center;
    height: 22px;
    padding: 0 1px 0 5px;
    border: 1px solid var(--line);
    border-bottom: 0;
    background: #bfcddb;
  }
  .pane-title h2 {
    flex: 1;
  }
  .pane-title button {
    width: 20px;
    height: 20px;
  }
  .tree-box {
    position: relative;
    display: flex;
    flex: 1;
    border: 1px solid var(--dark);
    background: #fff;
  }
  .tree {
    flex: 1;
    min-width: 0;
    padding: 0 10px 0 39px;
    list-style: none;
  }
  .tree li {
    display: flex;
    height: 19px;
  }
  .cell {
    display: flex;
    align-items: center;
    justify-content: center;
    width: 20px;
    background-repeat: no-repeat;
    --dots-y: repeating-linear-gradient(#999 0 1px, transparent 1px 2px);
    --dots-x: repeating-linear-gradient(90deg, #999 0 1px, transparent 1px 2px);
  }
  .full {
    background-image: var(--dots-y);
    background-size: 1px 19px;
    background-position: 11px 0;
  }
  .half {
    background-image: var(--dots-y), var(--dots-x);
    background-size: 1px 10px, 9px 1px;
    background-position: 11px 0, 11px 9px;
  }
  .own.full {
    background-image: var(--dots-y), var(--dots-x);
    background-size: 1px 19px, 9px 1px;
    background-position: 11px 0, 11px 9px;
  }
  .expander {
    width: 9px;
    height: 9px;
    background: linear-gradient(135deg, #fff, #c8d2da);
    box-shadow: 0 0 0 1px #b4c8cc;
  }
  .expander svg,
  .box svg {
    width: 9px;
    height: 9px;
  }
  .node {
    flex: 1;
    justify-content: flex-start;
    gap: 5px;
    padding-left: 1px;
    background: #fff;
  }
  .node.selected {
    background: #f0f0f0;
  }
  .node span {
    padding-top: 2px;
  }
  .tree-menu {
    position: absolute;
    top: 0;
    right: 16px;
    width: 17px;
    height: 17px;
    border: 1px solid #aaa;
    background: #e9e9e9;
  }
  .scrollbar {
    display: flex;
    flex-direction: column;
    width: 16px;
    background: var(--face);
  }
  .scrollbar svg {
    width: 15px;
    height: 17px;
    fill: none;
    stroke: #505050;
    stroke-width: 2;
  }
  .before {
    flex: 505;
  }
  .thumb {
    flex: 311;
    background: #cdcdcd;
  }
  .pane-tabs {
    display: flex;
    height: 21px;
    margin-top: 2px;
    border-top: 1px solid var(--line);
    color: #6d6d6d;
  }
  .pane-tabs button {
    gap: 3px;
    padding: 0 3px;
  }
  .pane-tabs .active {
    margin-top: -1px;
    border: 1px solid var(--line);
    border-top: 0;
    border-radius: 0 0 3px 3px;
    background: #fff;
    color: #000;
  }

  .editor {
    display: flex;
    flex-direction: column;
    flex: 1;
    min-width: 0;
    border: 1px solid var(--line);
    background: #fff;
  }
  .doc-tabs {
    display: flex;
    align-items: flex-end;
    justify-content: space-between;
    height: 20px;
    background: linear-gradient(var(--line), var(--line)) bottom / 100% 1px no-repeat #f0f0f0;
  }
  .doc-tab {
    display: flex;
    height: 18px;
    padding-left: 3px;
  }
  .slant {
    width: 20px;
    height: 18px;
  }
  .doc-label {
    display: flex;
    align-items: center;
    gap: 6px;
    margin-left: -3px;
    border: 1px solid var(--line);
    border-width: 1px 1px 0 0;
    background: #fff;
  }
  .doc-label b {
    font-family: "Noto Sans", Tahoma, sans-serif;
    font-size: 12px;
  }
  .doc-list {
    width: 18px;
    height: 20px;
  }
  .page-tabs {
    display: flex;
    align-items: flex-end;
    height: 24px;
    padding-left: 2px;
  }
  .page-tabs button {
    height: 19px;
    padding: 2px 3px 0;
    border: 1px solid #d9d9d9;
    border-bottom: 0;
    background: #f0f0f0;
    gap: 6px;
  }
  .page-tabs .active {
    height: 21px;
    padding: 0 6px;
    background: #fff;
  }
  .page {
    flex: 1;
    margin: 0 2px 2px 1px;
    padding: 21px 9px 24px 7px;
    border: 1px solid #dcdcdc;
    border-width: 1px 1px 1px 0;
    box-shadow: inset 3px 1px #fff;
    background: #efefef;
  }
  .intro {
    display: flex;
    gap: 56px;
    padding: 0 0 0 30px;
  }
  .rack {
    width: 18px;
    height: 32px;
    margin-top: 4px;
  }
  .intro h3 {
    font-family: "Liberation Sans", Arial, sans-serif;
    font-size: 12px;
    font-weight: bold;
    margin-bottom: 12px;
  }
  .links {
    display: flex;
    gap: 50px;
    padding: 14px 0 12px 22px;
  }
  .links a {
    color: #00f;
  }
  .groups {
    display: flex;
    gap: 5px;
    padding-left: 2px;
  }
  fieldset {
    box-sizing: border-box;
    width: 392px;
    min-width: 0;
    margin: 0;
    padding: 0 2px 1px;
    border: 1px solid #dcdcdc;
  }
  fieldset + fieldset {
    width: 400px;
  }
  legend {
    margin-left: 2px;
    padding: 0 3px;
  }
  .data-tree {
    box-sizing: border-box;
    height: 315px;
    margin-top: 1px;
    padding: 1px 8px;
    border: 1px solid #828790;
    background: #fff;
  }
  .data-root,
  .data-node {
    display: flex;
    align-items: center;
    height: 16px;
  }
  .data-node {
    padding-left: 19px;
    background: repeating-linear-gradient(#999 0 1px, transparent 1px 2px) 23px 0 / 1px 100% no-repeat;
  }
  .data-node:last-child {
    background-size: 1px 8px;
  }
  .data-root span,
  .data-node span {
    margin-left: 4px;
  }
  .box {
    border: 1px solid #919191;
    width: 9px;
    height: 9px;
    background: #fff;
  }
  .box path {
    stroke: #2a4aa0;
  }
  .link {
    width: 6px;
    height: 1px;
    background: repeating-linear-gradient(90deg, #999 0 1px, transparent 1px 2px);
  }
  .user-row {
    display: flex;
    align-items: center;
    height: 28px;
    margin: 21px 0 0 2px;
    padding: 0 4px 0 5px;
    border: 2px solid;
    border-width: 2px 1px 1px 2px;
    border-color: #7c7c7c #fff #fff #7c7c7c;
  }
  .user-row label {
    width: 138px;
  }
  .user-row b {
    width: 192px;
  }
  .user-row input {
    flex: 1;
    height: 17px;
    padding: 0 1px 2px;
    border: 1px solid #7a7a7a;
    box-shadow: inset 1px 1px #fff;
  }

  .filter-bar {
    display: flex;
    align-items: center;
    height: 24px;
    padding-left: 5px;
    background: linear-gradient(#fff, #f4f4f4);
  }
  .filter-bar button {
    gap: 2px;
    padding-top: 1px;
  }
  .filter-bar .divider {
    margin: 0 6px 0 0;
  }
  .property-box {
    flex: 1;
    border: 1px solid var(--dark);
    background: #fff;
  }
  .property-box table {
    width: 100%;
    border-collapse: collapse;
  }
  .property-box th {
    height: 24px;
    padding: 1px 6px 0;
    font-weight: normal;
    text-align: left;
  }
  .property-box th:first-child {
    width: 122px;
    border-right: 1px solid #e5e5e5;
  }
  .description {
    height: 55px;
    margin-top: 6px;
    border: 1px solid #dcdcdc;
    background: #f0f0f0;
  }

  .hidden-panes {
    display: flex;
    gap: 1px;
    height: 20px;
    padding: 2px 0 0 2px;
    border-bottom: 1px solid #d7d7d7;
    color: #6d6d6d;
  }
  .hidden-panes button {
    gap: 8px;
    padding: 0 6px 0 2px;
    border: 1px solid var(--dark);
    border-bottom: 0;
    border-radius: 3px 3px 0 0;
  }
  .status {
    display: flex;
    align-items: center;
    justify-content: flex-end;
    height: 21px;
    padding-right: 18px;
    background: var(--face);
  }
  .status > span {
    box-sizing: border-box;
    display: flex;
    align-items: center;
    height: 20px;
    border-left: 1px solid #d7d7d7;
  }
  .device-user {
    width: 200px;
    padding-left: 35px;
  }
  .last-build {
    width: 262px;
    gap: 4px;
    padding-left: 31px;
  }
  .precompile {
    display: flex;
    align-items: center;
    gap: 4px;
    margin-left: 16px;
  }
  .status .project-user {
    width: 240px;
    padding-left: 63px;
  }
  .slot {
    width: 24px;
    padding-left: 4px;
  }
  .slot.wide {
    gap: 13px;
    width: 52px;
  }

  .taskbar {
    display: flex;
    height: 40px;
    background: linear-gradient(to right, #22353f, #1f2f40 75%, #1b2840);
  }
  .start {
    width: 48px;
  }
  .search {
    box-sizing: border-box;
    display: flex;
    align-items: center;
    gap: 12px;
    width: 344px;
    padding: 0 12px;
    border: 1px solid #b8bcbe;
    background: #f2f2f2;
    font-family: "Open Sans", "Segoe UI", sans-serif;
    font-size: 14px;
  }
  .search input {
    flex: 1;
    min-width: 0;
    height: 30px;
  }
  .search input::placeholder {
    color: #444;
    opacity: 1;
  }
  .app {
    width: 48px;
    margin-right: 1px;
    background: linear-gradient(#76b9ed, #76b9ed) bottom / 0 2px no-repeat;
  }
  .task-view {
    margin-right: 3px;
  }
  .app.open {
    background-size: 40px 2px;
  }
  .app.active {
    background-color: #4c5e67;
    background-size: 48px 2px;
  }
  .app-icon {
    width: 24px;
    height: 24px;
  }
  .app-name {
    font: bold 8px "Open Sans", sans-serif;
    text-anchor: middle;
  }
  .app-brand {
    font: bold 6px "Open Sans", sans-serif;
    text-anchor: middle;
  }
  .tray {
    display: flex;
    align-items: center;
    gap: 8px;
    margin-left: auto;
    color: #fff;
    font-family: "Open Sans", "Segoe UI", sans-serif;
    font-size: 11px;
    line-height: 18px;
    text-align: center;
  }
  .tray .icon {
    fill: none;
    stroke: #fff;
  }
  .tray time {
    margin: 0 9px 0 3px;
  }
  .peek {
    width: 4px;
    height: 40px;
    margin-left: 12px;
    border-left: 1px solid #6d7683;
  }
  .watermark {
    position: absolute;
    right: 86px;
    bottom: 89px;
    display: flex;
    flex-direction: column;
    width: 272px;
    color: rgba(110, 110, 110, 0.45);
    font-family: "Open Sans", "Segoe UI", sans-serif;
    font-size: 14px;
    line-height: 20px;
    white-space: nowrap;
    pointer-events: none;
  }
  .watermark strong {
    font-size: 19px;
    font-weight: normal;
    line-height: 26px;
  }
</style>
